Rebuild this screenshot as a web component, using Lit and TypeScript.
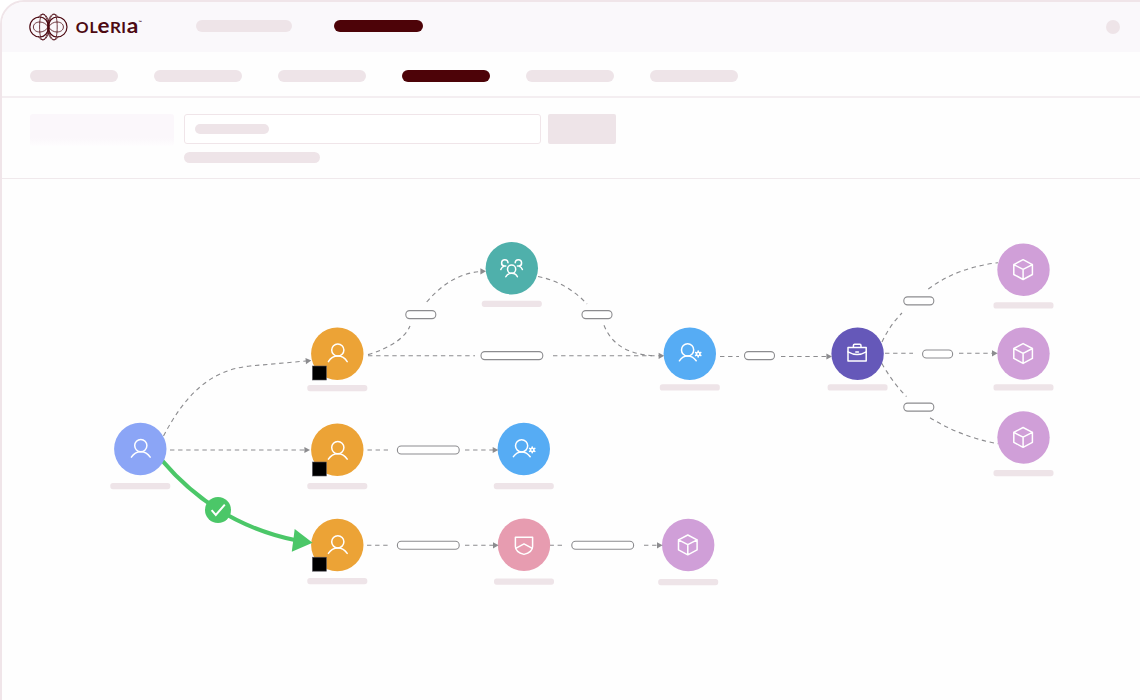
import { LitElement, html, svg, css } from 'lit';
import { customElement, property } from 'lit/decorators.js';
import { classMap } from 'lit/directives/class-map.js';

type Kind = 'user' | 'person' | 'team' | 'admin' | 'role' | 'policy' | 'resource';

interface GraphNode {
  kind: Kind;
  x: number;
  y: number;
  /** top of the name bar under the circle */
  label: number;
  badge?: boolean;
  /** vertical nudge of the glyph inside the circle */
  dy?: number;
}

const NODES: GraphNode[] = [
  { kind: 'user', x: 140.3, y: 449, label: 483, dy: 0.4 },
  { kind: 'person', x: 337.3, y: 353.8, label: 385, badge: true },
  { kind: 'person', x: 337.3, y: 449.8, label: 483, badge: true, dy: 1.6 },
  { kind: 'person', x: 337.3, y: 545, label: 578, badge: true, dy: 0.6 },
  { kind: 'team', x: 511.8, y: 268.2, label: 300.7 },
  { kind: 'admin', x: 689.8, y: 353.7, label: 384.3 },
  { kind: 'admin', x: 523.8, y: 449, label: 483, dy: 0.6 },
  { kind: 'policy', x: 524, y: 544.8, label: 578.5 },
  { kind: 'role', x: 857.6, y: 353.7, label: 384.3 },
  { kind: 'resource', x: 1023.5, y: 269.7, label: 302.3 },
  { kind: 'resource', x: 1023.5, y: 353.6, label: 384.3 },
  { kind: 'resource', x: 1023.5, y: 437.5, label: 470 },
  { kind: 'resource', x: 688.2, y: 545, label: 579 },
];

const EDGES = [
  'M163.5 436C185 395 210 370 250 366L306 361',
  'M170 450H306',
  'M368 354.6C390 348 405 338 410 326',
  'M426.7 302C442 284 460 273 481 271.4',
  'M538 276.5C557 280 574 290 587 304',
  'M604 325.3C611 343 626 354 652 355.6',
  'M368 355.8H475',
  'M553 355.8H660',
  'M720 356.5H739',
  'M781 356.5H827',
  'M885 353.3H913',
  'M959 353.3H993',
  'M882 342C887 331 894 321 902 313',
  'M928.3 289C947 275 970 266 998 262.7',
  'M881.7 363.3C889 376 897 387 906.5 396.5',
  'M930 417.7C950 430 972 439 998 443.7',
  'M367.5 450H388',
  'M465 450H493',
  'M367 545.3H388',
  'M465 545.3H493',
  'M549.5 545.3H563',
  'M644 545.3H657',
];

/** Arrow tips: x, y, rotation */
const ARROWS = [
  [311.3, 360.6, -5],
  [310, 450, 0],
  [486, 271.3, 0],
  [664.2, 355.8, 0],
  [832, 356.5, 0],
  [997.6, 353.3, 0],
  [498.3, 450, 0],
  [498.6, 545.3, 0],
  [662.6, 545.3, 0],
];

/** Edge pills: x, y, width */
const PILLS = [
  [405.8, 310.6, 30],
  [582, 310.6, 30],
  [481, 351.6, 61.8],
  [744.5, 351.6, 30],
  [903.8, 296.9, 30],
  [922.6, 350, 30],
  [903.8, 403.1, 30],
  [397.4, 446, 61.8],
  [397.4, 541.2, 61.8],
  [571.8, 541.2, 61.8],
];

const person = svg`
  <circle cx="0.5" cy="-3.8" r="6.1" />
  <path d="M-8.9 7.8C-6.8 4.4 -3.7 2.3 0.5 2.3S7.8 4.4 9.9 7.8" />
`;

const GLYPHS = {
  user: person,
  person,
  team: svg`
    <circle cx="-0.2" cy="1" r="4.1" />
    <path d="M-6 8.5C-5 6.2 -2.8 5.1 -0.2 5.1S4.6 6.2 5.6 8.5" />
    <path d="M-3.8 -5.4A3.2 3.2 0 1 0 -7.4 -2.1C-9.2 -1.6 -10.4 -0.5 -11 1.4M-7.4 -2.1H-6" />
    <path d="M3.4 -5.4A3.2 3.2 0 1 1 7 -2.1C8.8 -1.6 10 -0.5 10.6 1.4M7 -2.1H5.6" />
  `,
  admin: svg`
    <circle cx="-2.2" cy="-3.8" r="6.1" />
    <path d="M-10.4 7.1C-8.4 4.1 -6 2.3 -2.2 2.3S4.2 4 6.4 7.1" />
    <circle cx="8.4" cy="0.3" r="1.7" />
    <path class="teeth" d="M8.4 -2.6V-1.6M8.4 2.2V3.2M5.8 -1.2L6.7 -0.7M10.1 1.3L11 1.8M5.8 1.8L6.7 1.3M10.1 -0.7L11 -1.2" />
  `,
  role: svg`
    <path d="M-9.6 -6.2H8.6V7.4H-9.6ZM-4.2 -6.2V-8.2Q-4.2 -9.4 -3 -9.4H2.2Q3.4 -9.4 3.4 -8.2V-6.2" />
    <path d="M-9.6 -1.8C-6 0.2 -3 0.8 -0.5 0.8S5.2 0.2 8.6 -1.8M-1.8 -1.7H0.8" />
  `,
  policy: svg`
    <path d="M-8.6 -7.6H8.6V1.6C8.6 5.8 4.2 8.4 0 9.6C-4.2 8.4 -8.6 5.8 -8.6 1.6Z" />
    <path d="M-7.8 3.4L0 -0.9L7.8 3.4" />
  `,
  resource: svg`
    <path d="M-0.4 -10L8.9 -5.1V4.8L-0.4 9.8L-9.7 4.8V-5.1ZM-9.7 -5.1L-0.4 -0.3L8.9 -5.1M-0.4 -0.3V9.8" />
  `,
};

@customElement('oleria-logo')
export class OleriaLogo extends LitElement {
  static styles = css`
    :host {
      display: block;
      width: 116px;
      height: 30px;
    }

    svg {
      display: block;
      width: 100%;
      height: 100%;
    }

    .mark {
      fill: none;
      stroke: #4d0a12;
      stroke-width: 0.8;
    }

    .bold {
      stroke-width: 1.2;
    }

    .word {
      fill: #4d0a12;
      font-family: Lato, 'Open Sans', sans-serif;
      font-size: 15.8px;
      font-weight: 700;
    }

    .low {
      font-size: 21px;
    }

    .tm {
      font-size: 4.5px;
    }
  `;

  render() {
    // one half of the butterfly, mirrored around x = 48.4
    const wing = svg`
      <path class="bold" d="M48.4 27C48.4 21 44.5 17 39.8 17A10 10 0 0 0 39.8 37C44.5 37 48.4 33 48.4 27" />
      <path d="M48.4 27C46 23.6 43 22 40 22C36 22 33.4 24 33.4 27S36 32 40 32C43 32 46 30.4 48.4 27" />
      <path d="M49.4 27C49 19 46 14 42.8 14C40.6 14 39.6 20 39.6 27S40.6 40 42.8 40C46 40 49 35 49.4 27" />
      <path d="M38.4 18C40 13.4 44 13 46.2 17.5C47.6 20.5 48.4 24 48.4 27S47.6 33.5 46.2 36.5C44 41 40 40.6 38.4 36" />
    `;

    return html`
      <svg viewBox="28 12 116 30" aria-label="Oleria">
        <g class="mark">
          ${wing}
          <g transform="translate(96.8 0) scale(-1 1)">${wing}</g>
        </g>
        <g class="word">
          <text x="75.8" y="32.7" textLength="12.8" lengthAdjust="spacingAndGlyphs">O</text>
          <text x="89.4" y="32.7">L</text>
          <text class="low" x="97.4" y="32.7" textLength="12" lengthAdjust="spacingAndGlyphs">e</text>
          <text x="110" y="32.7" textLength="11" lengthAdjust="spacingAndGlyphs">R</text>
          <text x="121.3" y="32.7">I</text>
          <text class="low" x="126.8" y="32.7" textLength="11.6" lengthAdjust="spacingAndGlyphs">a</text>
          <text class="tm" x="138.4" y="24.4">™</text>
        </g>
      </svg>
    `;
  }
}

@customElement('access-graph')
export class AccessGraph extends LitElement {
  static styles = css`
    :host {
      display: block;
    }

    svg {
      display: block;
      width: 100%;
      height: 100%;
    }

    .edge {
      fill: none;
      stroke: #8c8c8f;
      stroke-width: 1.1;
      stroke-dasharray: 4.4 3.7;
    }

    .arrow {
      fill: #8c8c8f;
    }

    .pill {
      fill: #fff;
      stroke: #8c8c8f;
      stroke-width: 1.1;
    }

    .label {
      fill: #eee4e8;
    }

    .badge {
      fill: #000;
      stroke: #5c5a63;
      stroke-width: 0.6;
    }

    .glyph {
      fill: none;
      stroke: #fff;
      stroke-width: 1.5;
      stroke-linecap: round;
      stroke-linejoin: round;
    }

    .teeth {
      stroke-width: 1.6;
    }

    .user {
      fill: #8ba5f6;
    }

    .person {
      fill: #eca336;
    }

    .team {
      fill: #4fb0ab;
    }

    .admin {
      fill: #56acf4;
    }

    .role {
      fill: #6558b9;
    }

    .policy {
      fill: #e79cb0;
    }

    .resource {
      fill: #d09fd8;
    }

    .granted {
      fill: none;
      stroke: #4bc768;
      stroke-width: 4;
    }

    .granted-fill {
      fill: #4bc768;
    }

    .check {
      fill: none;
      stroke: #fff;
      stroke-width: 2;
    }
  `;

  @property({ attribute: false }) nodes: GraphNode[] = [];

  private renderNode(node: GraphNode) {
    const { kind, x, y, label, badge, dy = 0 } = node;
    return svg`
      <circle class=${kind} cx=${x} cy=${y} r="26.2" />
      <g class="glyph" transform="translate(${x} ${y + dy})">${GLYPHS[kind]}</g>
      ${badge
        ? svg`<rect class="badge" x=${x - 24.9} y=${y + 12.2} width="14" height="14" />`
        : null}
      <rect class="label" x=${x - 30} y=${label} width="60" height="6.2" rx="2.6" />
    `;
  }

  render() {
    return html`
      <svg viewBox="2 179 1138 521">
        ${EDGES.map((d) => svg`<path class="edge" d=${d} />`)}
        ${PILLS.map(
          ([x, y, w]) => svg`<rect class="pill" x=${x} y=${y} width=${w} height="8" rx="3.8" />`
        )}
        <path class="granted" d="M162 460.4Q216 524 296 540.3" />
        ${this.nodes.map((node) => this.renderNode(node))}
        ${ARROWS.map(
          ([x, y, a]) =>
            svg`<path class="arrow" d="M0 0L-5.6 -3.1V3.1Z" transform="translate(${x} ${y}) rotate(${a})" />`
        )}
        <path class="granted-fill" d="M294.7 529L312.6 542.8L291.8 551.8Z" />
        <circle class="granted-fill" cx="218" cy="510" r="13" />
        <path class="check" d="M211.6 510.2L215.8 515L224.8 504.6" />
      </svg>
    `;
  }
}

@customElement('app-root')
export class AppRoot extends LitElement {
  static styles = css`
    :host {
      display: block;
      height: 700px;
      background: #fff;
      overflow: hidden;
    }

    .frame {
      box-sizing: border-box;
      height: 100%;
      display: flex;
      flex-direction: column;
      border: solid #f0e5e9;
      border-width: 2px 0 0 2px;
      border-radius: 24px 0 0 0;
      overflow: hidden;
      background: #fefefe;
    }

    .bar {
      height: 12px;
      border-radius: 6px;
      background: #eee4e8;
    }

    .bar.active {
      background: #4d0308;
    }

    header {
      flex: none;
      height: 50px;
      display: flex;
      align-items: flex-start;
      padding: 0 20px 0 26px;
      background: #faf8fb;
    }

    oleria-logo {
      margin: 10px 52px 0 0;
    }

    header .bar {
      width: 96px;
      height: 11.5px;
      margin-top: 18px;
    }

    header .bar.active {
      width: 88.5px;
      margin-left: 42px;
    }

    .avatar {
      width: 14px;
      height: 14px;
      margin: 18px 0 0 auto;
      border-radius: 50%;
      background: #eee4e8;
    }

    nav {
      flex: none;
      box-sizing: border-box;
      height: 46px;
      display: flex;
      gap: 36px;
      padding: 18px 28px 0;
      border-bottom: 2px solid #f4eef1;
    }

    nav .bar {
      width: 88px;
    }

    .filters {
      flex: none;
      box-sizing: border-box;
      height: 81px;
      display: grid;
      grid-template-columns: 144px 357px 65px;
      grid-template-rows: 30px 11px;
      column-gap: 10px;
      row-gap: 8px;
      padding: 16px 28px 0;
      border-bottom: 1px solid #f0e9ec;
    }

    .title {
      height: 32px;
      border-radius: 3px;
      background: linear-gradient(#fbf7fb 75%, #fefdfe);
    }

    .field {
      display: flex;
      align-items: center;
      padding-left: 10px;
      border: 1px solid #f0e5e9;
      border-radius: 3px;
      background: #fff;
    }

    .field .bar {
      width: 74px;
      height: 10px;
    }

    .button {
      margin-left: -3px;
      border-radius: 2px;
      background: #eee4e8;
    }

    .hint {
      grid-column: 2;
      width: 136px;
      height: 11px;
    }

    access-graph {
      flex: 1;
      min-height: 0;
    }
  `;

  private tabs = [0, 1, 2, 3, 4, 5];
  private activeTab = 3;

  render() {
    return html`
      <div class="frame">
        <header>
          <oleria-logo></oleria-logo>
          <div class="bar"></div>
          <div class="bar active"></div>
          <div class="avatar"></div>
        </header>
        <nav>
          ${this.tabs.map(
            (tab) => html`<div class=${classMap({ bar: true, active: tab === this.activeTab })}></div>`
          )}
        </nav>
        <section class="filters">
          <div class="title"></div>
          <div class="field"><div class="bar"></div></div>
          <div class="button"></div>
          <div class="bar hint"></div>
        </section>
        <access-graph .nodes=${NODES}></access-graph>
      </div>
    `;
  }
}

declare global {
  interface HTMLElementTagNameMap {
    'app-root': AppRoot;
    'access-graph': AccessGraph;
    'oleria-logo': OleriaLogo;
  }
}
